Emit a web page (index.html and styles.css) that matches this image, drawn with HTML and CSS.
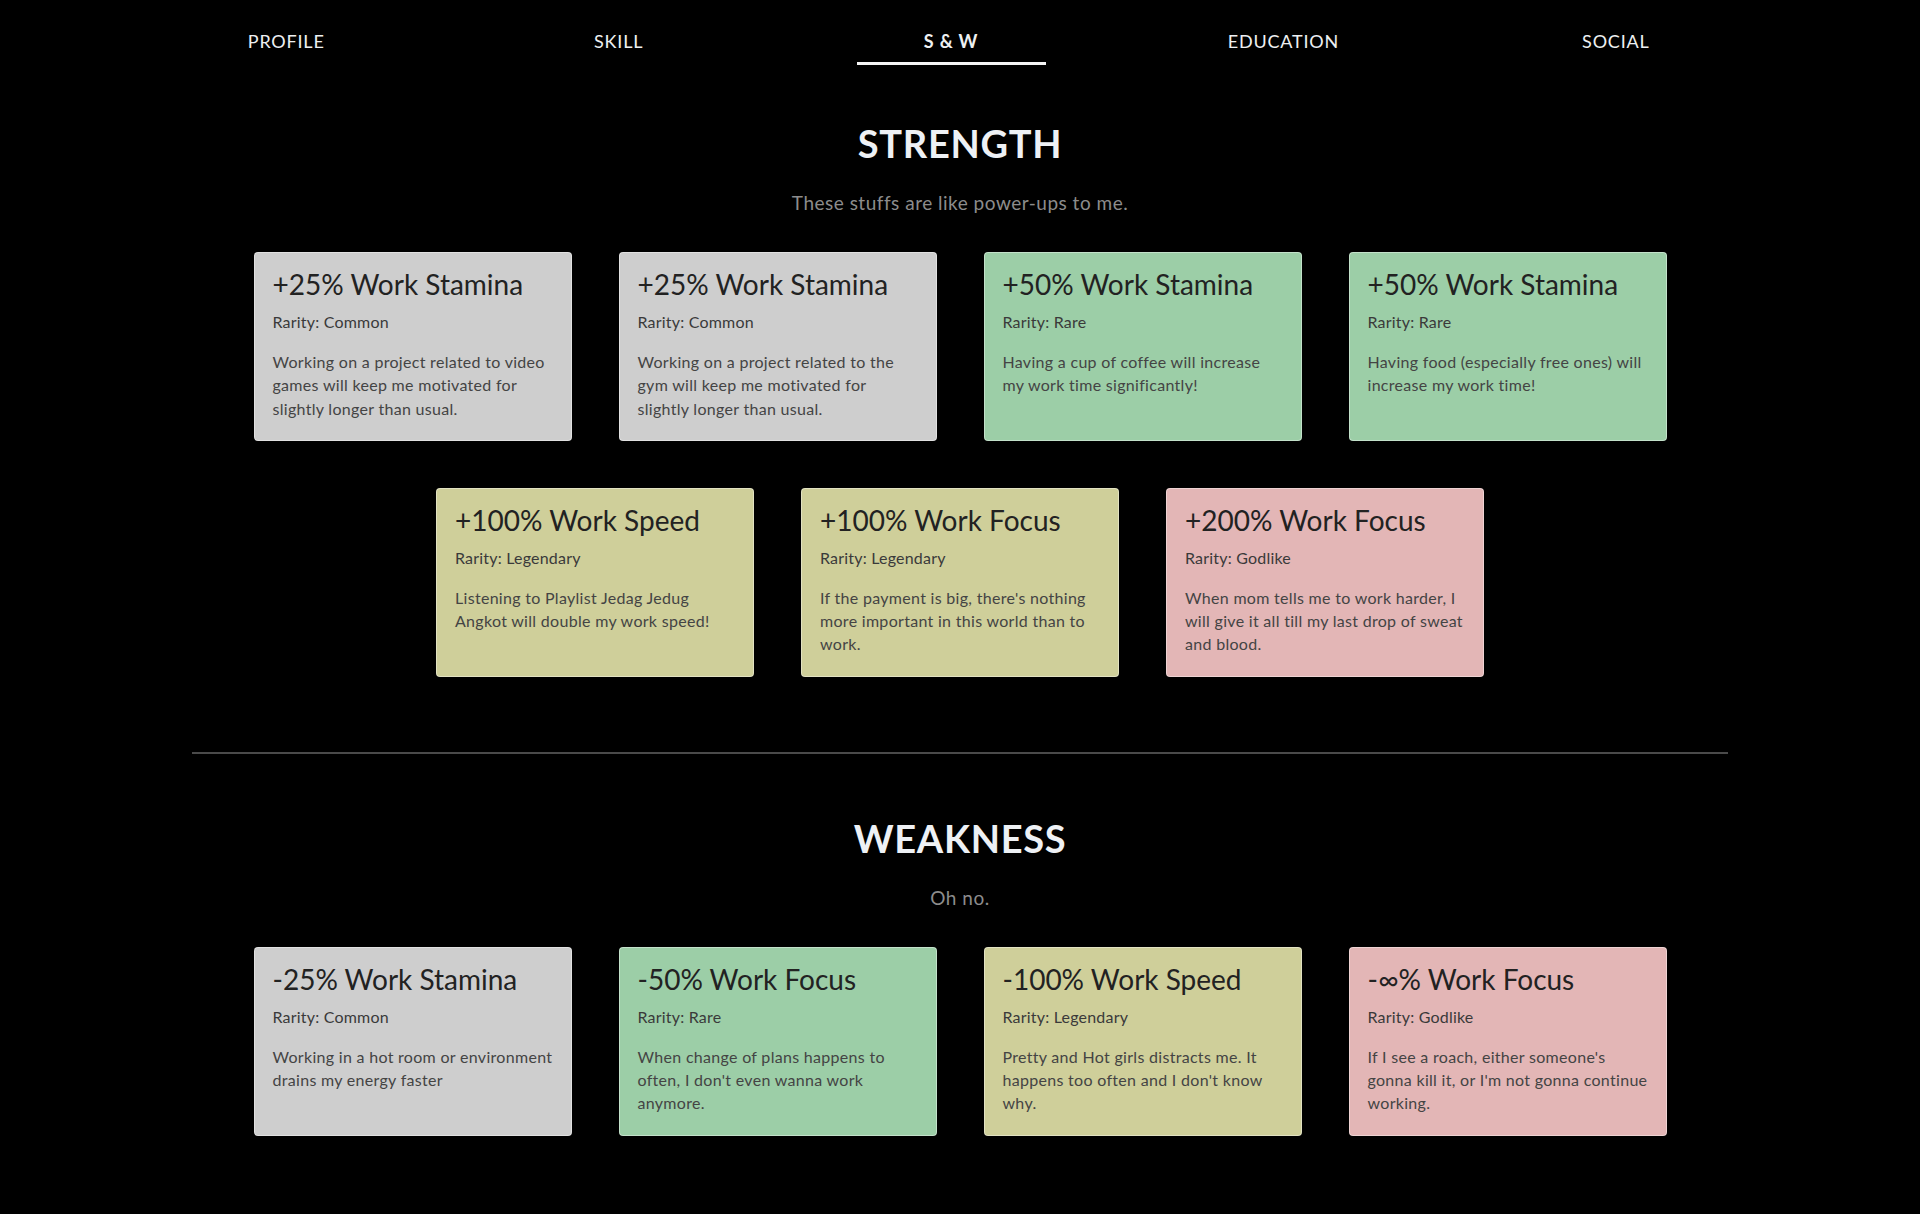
FILE: index.html
```html
<!DOCTYPE html>
<html lang="en">
<head>
<meta charset="utf-8">
<title>S &amp; W</title>
<link rel="stylesheet" href="styles.css">
</head>
<body>
<nav class="nav">
  <div class="nav-item"><a class="nav-link" href="#">PROFILE</a></div>
  <div class="nav-item"><a class="nav-link" href="#">SKILL</a></div>
  <div class="nav-item"><a class="nav-link active" href="#">S &amp; W</a></div>
  <div class="nav-item"><a class="nav-link" href="#">EDUCATION</a></div>
  <div class="nav-item"><a class="nav-link" href="#">SOCIAL</a></div>
</nav>

<section class="section section-strength">
  <h2 class="section-title">STRENGTH</h2>
  <p class="section-sub">These stuffs are like power-ups to me.</p>
  <div class="cards">
    <div class="card common">
      <h3 class="card-title">+25% Work Stamina</h3>
      <p class="card-rarity">Rarity: Common</p>
      <p class="card-desc">Working on a project related to video games will keep me motivated for slightly longer than usual.</p>
    </div>
    <div class="card common">
      <h3 class="card-title">+25% Work Stamina</h3>
      <p class="card-rarity">Rarity: Common</p>
      <p class="card-desc">Working on a project related to the gym will keep me motivated for slightly longer than usual.</p>
    </div>
    <div class="card rare">
      <h3 class="card-title">+50% Work Stamina</h3>
      <p class="card-rarity">Rarity: Rare</p>
      <p class="card-desc">Having a cup of coffee will increase my work time significantly!</p>
    </div>
    <div class="card rare">
      <h3 class="card-title">+50% Work Stamina</h3>
      <p class="card-rarity">Rarity: Rare</p>
      <p class="card-desc">Having food (especially free ones) will increase my work time!</p>
    </div>
    <div class="card legendary">
      <h3 class="card-title">+100% Work Speed</h3>
      <p class="card-rarity">Rarity: Legendary</p>
      <p class="card-desc">Listening to Playlist Jedag Jedug Angkot will double my work speed!</p>
    </div>
    <div class="card legendary">
      <h3 class="card-title">+100% Work Focus</h3>
      <p class="card-rarity">Rarity: Legendary</p>
      <p class="card-desc">If the payment is big, there's nothing more important in this world than to work.</p>
    </div>
    <div class="card godlike">
      <h3 class="card-title">+200% Work Focus</h3>
      <p class="card-rarity">Rarity: Godlike</p>
      <p class="card-desc">When mom tells me to work harder, I will give it all till my last drop of sweat and blood.</p>
    </div>
  </div>
</section>

<hr class="divider">

<section class="section section-weakness">
  <h2 class="section-title">WEAKNESS</h2>
  <p class="section-sub">Oh no.</p>
  <div class="cards">
    <div class="card common">
      <h3 class="card-title">-25% Work Stamina</h3>
      <p class="card-rarity">Rarity: Common</p>
      <p class="card-desc">Working in a hot room or environment drains my energy faster</p>
    </div>
    <div class="card rare">
      <h3 class="card-title">-50% Work Focus</h3>
      <p class="card-rarity">Rarity: Rare</p>
      <p class="card-desc">When change of plans happens to often, I don't even wanna work anymore.</p>
    </div>
    <div class="card legendary">
      <h3 class="card-title">-100% Work Speed</h3>
      <p class="card-rarity">Rarity: Legendary</p>
      <p class="card-desc">Pretty and Hot girls distracts me. It happens too often and I don't know why.</p>
    </div>
    <div class="card godlike">
      <h3 class="card-title">-∞% Work Focus</h3>
      <p class="card-rarity">Rarity: Godlike</p>
      <p class="card-desc">If I see a roach, either someone's gonna kill it, or I'm not gonna continue working.</p>
    </div>
  </div>
</section>
</body>
</html>
```

FILE: styles.css
```css
* { box-sizing: border-box; }

body {
  margin: 0;
  background: #000;
  color: #eee;
  font-family: Lato, "Open Sans", sans-serif;
}

.nav {
  display: flex;
  width: 1662px;
  margin: 0 0 0 120px;
  padding-top: 28px;
}

.nav-item {
  flex: 1;
  text-align: center;
}

.nav-link {
  display: inline-block;
  color: #eef0f2;
  text-decoration: none;
  font-size: 18px;
  line-height: 26px;
  letter-spacing: 0.8px;
  padding-bottom: 8px;
  border-bottom: 3px solid transparent;
}

.nav-link.active {
  width: 189px;
  font-weight: 700;
  border-bottom-color: #f4f4f4;
}

.section {
  display: flex;
  flex-direction: column;
  align-items: center;
}

.section-strength { padding-top: 55px; }
.section-weakness { padding-top: 61px; }

.section-title {
  margin: 0;
  font-size: 38px;
  line-height: 46px;
  font-weight: 700;
  color: #eef1f5;
  letter-spacing: 0.7px;
}

.section-sub {
  margin: 25px 0 0;
  font-size: 19px;
  line-height: 24px;
  letter-spacing: 0.5px;
  color: #8c8c8c;
}

.cards {
  display: flex;
  flex-wrap: wrap;
  justify-content: center;
  column-gap: 47px;
  row-gap: 47px;
  width: 1420px;
  margin-top: 37px;
}

.card {
  width: 318px;
  padding: 14px 18px 20px;
  border-radius: 4px;
  border: 1px solid rgba(255, 255, 255, 0.4);
  color: #2a2a2a;
}

.common { background: #cecece; }
.rare { background: #9ccea7; }
.legendary { background: #cfcf9a; }
.godlike { background: #e3b6b6; }

.card-title {
  margin: 0;
  font-size: 28px;
  line-height: 34px;
  font-weight: 400;
  color: #222;
}

.card-rarity {
  margin: 10px 0 0;
  font-size: 16px;
  line-height: 22px;
  letter-spacing: 0.2px;
  color: #3a3a3a;
}

.card-desc {
  margin: 17px 0 0;
  font-size: 16px;
  line-height: 23.3px;
  letter-spacing: 0.3px;
  color: #444;
}

.divider {
  width: 80%;
  margin: 75px auto 0;
  border: 0;
  border-top: 2px solid #4a4a4a;
}
```
